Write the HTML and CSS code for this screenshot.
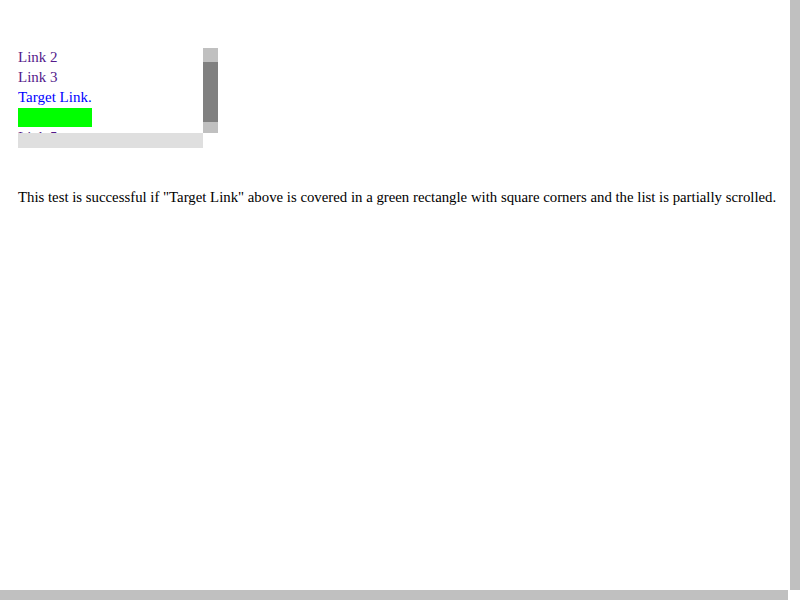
FILE: index.html
```html
<!DOCTYPE html>
<html>
<head>
<meta charset="utf-8">
<title>Scroll test</title>
<link rel="stylesheet" href="styles.css">
</head>
<body>
<div class="viewport">
  <main class="page">
    <div class="scrollbox">
      <div class="scroll-view">
        <ul class="list">
          <li><a class="link visited" href="#l1">Link 1</a></li>
          <li><a class="link visited" href="#l2">Link 2</a></li>
          <li><a class="link visited" href="#l3">Link 3</a></li>
          <li><a class="link target" href="#t">Target Link.</a></li>
          <li><div class="marker"></div></li>
          <li><a class="link visited" href="#l5">Link 5</a></li>
        </ul>
      </div>
      <div class="vbar"><div class="vthumb"></div></div>
      <div class="hbar"></div>
      <div class="corner"></div>
    </div>
    <p class="note">This test is successful if "Target Link" above is covered in a green rectangle with square corners and the list is partially scrolled.</p>
  </main>
  <div class="page-vbar"></div>
  <div class="page-hbar"></div>
</div>
</body>
</html>
```

FILE: styles.css
```css
html, body {
  margin: 0;
  padding: 0;
  background: #ffffff;
}

body {
  font-family: "Liberation Serif", "Times New Roman", serif;
  font-size: 15px;
  color: #000000;
}

.viewport {
  display: grid;
  grid-template-columns: 790px 10px;
  grid-template-rows: 590px 10px;
  width: 800px;
  height: 600px;
  overflow: hidden;
}

.page {
  padding: 48px 0 0 18px;
  overflow: hidden;
}

.page-vbar {
  background: #c0c0c0;
}

.page-hbar {
  width: 788px;
  background: #c0c0c0;
}

.scrollbox {
  display: grid;
  grid-template-columns: 185px 15px;
  grid-template-rows: 85px 15px;
  width: 200px;
}

.scroll-view {
  overflow: hidden;
}

.list {
  list-style: none;
  margin: -20px 0 0 0;
  padding: 0;
}

.list li {
  height: 20px;
  line-height: 19px;
}

.link {
  text-decoration: none;
}

.visited {
  color: #551a8b;
}

.target {
  color: #0000ff;
}

.marker {
  width: 74px;
  height: 19px;
  background: #00ff00;
}

.vbar {
  background: #c0c0c0;
  padding-top: 14px;
}

.vthumb {
  height: 60px;
  background: #808080;
}

.hbar {
  background: #dfdfdf;
}

.corner {
  background: #ffffff;
}

.note {
  margin: 39px 0 0 0;
  font-size: 14.8px;
  line-height: 20px;
  white-space: nowrap;
}
```
